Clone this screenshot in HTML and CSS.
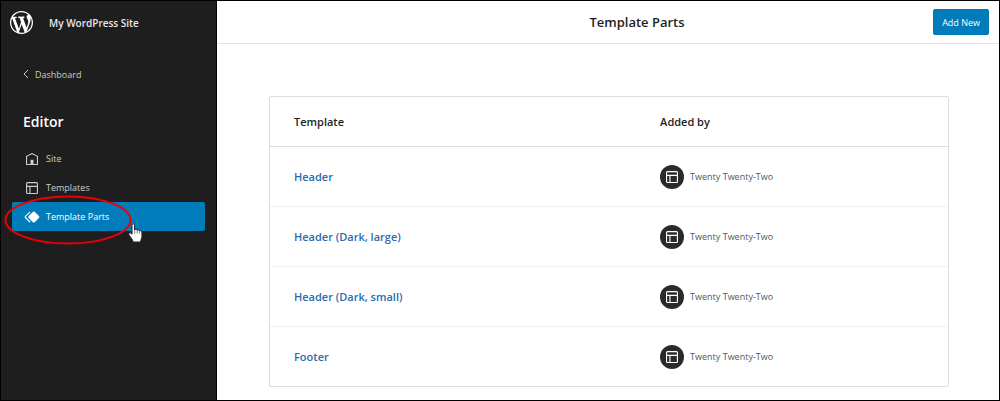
FILE: index.html
```html
<!DOCTYPE html>
<html lang="en">
<head>
  <meta charset="UTF-8">
  <meta name="viewport" content="width=device-width, initial-scale=1">
  <title>Template Parts</title>
  <link rel="stylesheet" href="styles.css">
</head>
<body>

  <!-- Shared icons -->
  <svg class="sprite" aria-hidden="true">
    <symbol id="icon-layout" viewBox="0 0 24 24">
      <path d="M18 5.5H6a.5.5 0 00-.5.5v3h13V6a.5.5 0 00-.5-.5zm.5 5H10v8h8a.5.5 0 00.5-.5v-7.5zm-10 0h-3V18a.5.5 0 00.5.5h2.5v-8zM6 4h12a2 2 0 012 2v12a2 2 0 01-2 2H6a2 2 0 01-2-2V6a2 2 0 012-2z"/>
    </symbol>
  </svg>

  <div class="editor">
    <aside class="sidebar">
      <div class="site-header">
        <svg class="logo" viewBox="0 0 20 20"><path d="M20 10c0-5.51-4.49-10-10-10C4.48 0 0 4.49 0 10c0 5.52 4.48 10 10 10 5.51 0 10-4.48 10-10zM7.78 15.37L4.37 6.22c.55-.02 1.17-.08 1.17-.08.5-.06.44-1.13-.06-1.11 0 0-1.45.11-2.37.11-.18 0-.37 0-.58-.01C4.12 2.69 6.87 1.11 10 1.11c2.33 0 4.45.87 6.05 2.34-.68-.11-1.65.39-1.65 1.58 0 .74.45 1.36.9 2.1.35.61.55 1.36.55 2.46 0 1.49-1.4 5-1.4 5l-3.03-8.37c.54-.02.82-.17.82-.17.5-.05.44-1.25-.06-1.22 0 0-1.44.12-2.38.12-.87 0-2.33-.12-2.33-.12-.5-.03-.56 1.2-.06 1.22l.92.08 1.26 3.41zM17.41 10c.24-.64.74-1.87.43-4.25.7 1.29 1.05 2.71 1.05 4.25 0 3.29-1.73 6.24-4.4 7.78.97-2.59 1.94-5.2 2.92-7.78zM6.1 18.09C3.12 16.65 1.11 13.53 1.11 10c0-1.3.23-2.48.72-3.59C3.25 10.3 4.67 14.2 6.1 18.09zm4.03-6.63l2.58 6.98c-.86.29-1.76.45-2.71.45-.79 0-1.57-.11-2.29-.33.81-2.38 1.62-4.74 2.42-7.1z"/></svg>
        <span class="site-title">My WordPress Site</span>
      </div>

      <a class="back-link" href="#">
        <svg class="chevron" viewBox="0 0 6 10"><path d="M5 1L1 5l4 4"/></svg>
        Dashboard
      </a>

      <h2 class="nav-title">Editor</h2>

      <nav class="nav">
        <a class="nav-item" href="#">
          <svg class="icon" viewBox="0 0 24 24"><path d="M12 4L4 7.9V20h16V7.9L12 4zm6.5 14.5H14V13h-4v5.5H5.5V8.8L12 5.7l6.5 3.1v9.7z"/></svg>
          Site
        </a>
        <a class="nav-item" href="#">
          <svg class="icon"><use href="#icon-layout"/></svg>
          Templates
        </a>
        <a class="nav-item active" href="#">
          <svg class="icon" viewBox="0 0 24 24"><path d="M21.3 10.8l-5.6-5.6c-.7-.7-1.8-.7-2.5 0l-5.6 5.6c-.7.7-.7 1.8 0 2.5l5.6 5.6c.3.3.8.5 1.2.5s.9-.2 1.2-.5l5.6-5.6c.8-.7.8-1.9.1-2.5zm-17.6 1L10 5.5l-1-1-6.3 6.3c-.7.7-.7 1.8 0 2.5L9 19.5l1.1-1.1-6.3-6.3c-.2 0-.2-.2-.1-.3z"/></svg>
          Template Parts
          <svg class="highlight" viewBox="0 0 128 50"><ellipse cx="64" cy="25" rx="62.500" ry="23.500"/></svg>
          <svg class="pointer" viewBox="0 0 15 20"><path d="M4 2.200C4 .4 6.600.4 6.600 2.200V7c.6-.9 2.300-.8 2.500.3.600-.7 2.200-.5 2.400.6.900-.5 2.400 0 2.400 1.300v4.300c0 2-1.200 2.700-1.300 5.500H5.200C4.800 16.500 2.200 14 1 11.800c-.8-1.600.9-2.700 2.100-1.500l.9.900z"/><path class="fingers" d="M6.700 7.500v3M9.200 8v2.500M11.600 8.500v2"/></svg>
        </a>
      </nav>
    </aside>

    <main class="content">
      <header class="page-header">
        <h1 class="page-title">Template Parts</h1>
        <button class="add-new" type="button">Add New</button>
      </header>

      <div class="list">
        <table class="parts-table">
          <thead>
            <tr>
              <th class="name-col">Template</th>
              <th>Added by</th>
            </tr>
          </thead>
          <tbody>
            <tr>
              <td><a class="part-link" href="#">Header</a></td>
              <td><div class="added-by"><span class="avatar"><svg class="icon"><use href="#icon-layout"/></svg></span>Twenty Twenty-Two</div></td>
            </tr>
            <tr>
              <td><a class="part-link" href="#">Header (Dark, large)</a></td>
              <td><div class="added-by"><span class="avatar"><svg class="icon"><use href="#icon-layout"/></svg></span>Twenty Twenty-Two</div></td>
            </tr>
            <tr>
              <td><a class="part-link" href="#">Header (Dark, small)</a></td>
              <td><div class="added-by"><span class="avatar"><svg class="icon"><use href="#icon-layout"/></svg></span>Twenty Twenty-Two</div></td>
            </tr>
            <tr>
              <td><a class="part-link" href="#">Footer</a></td>
              <td><div class="added-by"><span class="avatar"><svg class="icon"><use href="#icon-layout"/></svg></span>Twenty Twenty-Two</div></td>
            </tr>
          </tbody>
        </table>
      </div>
    </main>
  </div>

</body>
</html>
```
FILE: styles.css
```css
* {
  box-sizing: border-box;
}

body {
  margin: 0;
  font-family: "Segoe UI", "Open Sans", "Noto Sans", sans-serif;
  font-size: 9px;
  color: #1e1e1e;
  background: #fff;
}

a {
  text-decoration: none;
}

.sprite {
  display: none;
}

.editor {
  display: flex;
  min-height: 100vh;
  border: 1px solid #000;
}

/* Sidebar */
.sidebar {
  flex: 0 0 216px;
  border-right: 1px solid #000;
  background: #1e1e1e;
  color: #ccc;
}

.site-header {
  display: flex;
  align-items: center;
  gap: 16px;
  height: 43px;
  padding-left: 9px;
}

.logo {
  width: 23px;
  height: 23px;
  fill: #fff;
}

.site-title {
  color: #e8e8e8;
  font-size: 10px;
  font-weight: 600;
}

.back-link {
  display: flex;
  align-items: center;
  gap: 6px;
  height: 20px;
  margin: 20px 0 0 22px;
  color: #ccc;
}

.chevron {
  width: 6px;
  height: 10px;
  fill: none;
  stroke: #ccc;
}

.nav-title {
  margin: 28px 0 12px 22px;
  font-size: 14px;
  line-height: 20px;
  font-weight: 600;
  color: #fff;
}

.nav {
  padding: 0 11px;
}

.nav-item {
  position: relative;
  display: flex;
  align-items: center;
  gap: 5px;
  height: 29px;
  padding-left: 11px;
  border-radius: 2px;
  color: #ccc;
  font-weight: 500;
}

.nav-item.active {
  background: #007cba;
  color: #fff;
}

.icon {
  width: 18px;
  height: 18px;
  fill: currentColor;
}

.highlight {
  position: absolute;
  left: -8px;
  top: -7px;
  width: 128px;
  height: 50px;
  fill: none;
  stroke: #ec0006;
  stroke-width: 2;
}

.pointer {
  position: absolute;
  left: 116px;
  top: 21px;
  width: 15px;
  height: 20px;
  fill: #fff;
  stroke: #222;
}

.pointer .fingers {
  stroke-width: 0.6;
}

/* Content */
.content {
  flex: 1;
}

.page-header {
  display: grid;
  grid-template-columns: 1fr auto 1fr;
  align-items: center;
  height: 43px;
  padding: 0 10px 0 68px;
  border-bottom: 1px solid #e4e4e4;
}

.page-title {
  grid-column: 2;
  margin: 0;
  font-size: 13px;
  font-weight: 600;
}

.add-new {
  justify-self: end;
  height: 26px;
  padding: 0 8px;
  border: 1px solid #0076b1;
  border-radius: 2px;
  background: #007cba;
  color: #fff;
  font-family: inherit;
  font-size: 9px;
  font-weight: 500;
}

.list {
  padding: 52px 50px 12px 52px;
}

.parts-table {
  width: 100%;
  border: 1px solid #ddd;
  border-radius: 2px;
  border-spacing: 0;
}

.parts-table th,
.parts-table td {
  height: 60px;
  padding: 0 24px;
  border-top: 1px solid #f0f0f0;
  text-align: left;
}

.parts-table th {
  height: 49px;
  border-top: none;
  font-size: 11px;
  font-weight: 600;
}

.parts-table tbody tr:first-child td {
  border-top-color: #ddd;
}

.parts-table .name-col {
  width: 54%;
}

.part-link {
  font-size: 11px;
  font-weight: 600;
  color: #2a6cad;
}

.added-by {
  display: flex;
  align-items: center;
  gap: 6px;
  color: #50575e;
}

.avatar {
  display: flex;
  align-items: center;
  justify-content: center;
  width: 24px;
  height: 24px;
  border-radius: 50%;
  background: #2a2a2a;
  color: #fff;
}
```
